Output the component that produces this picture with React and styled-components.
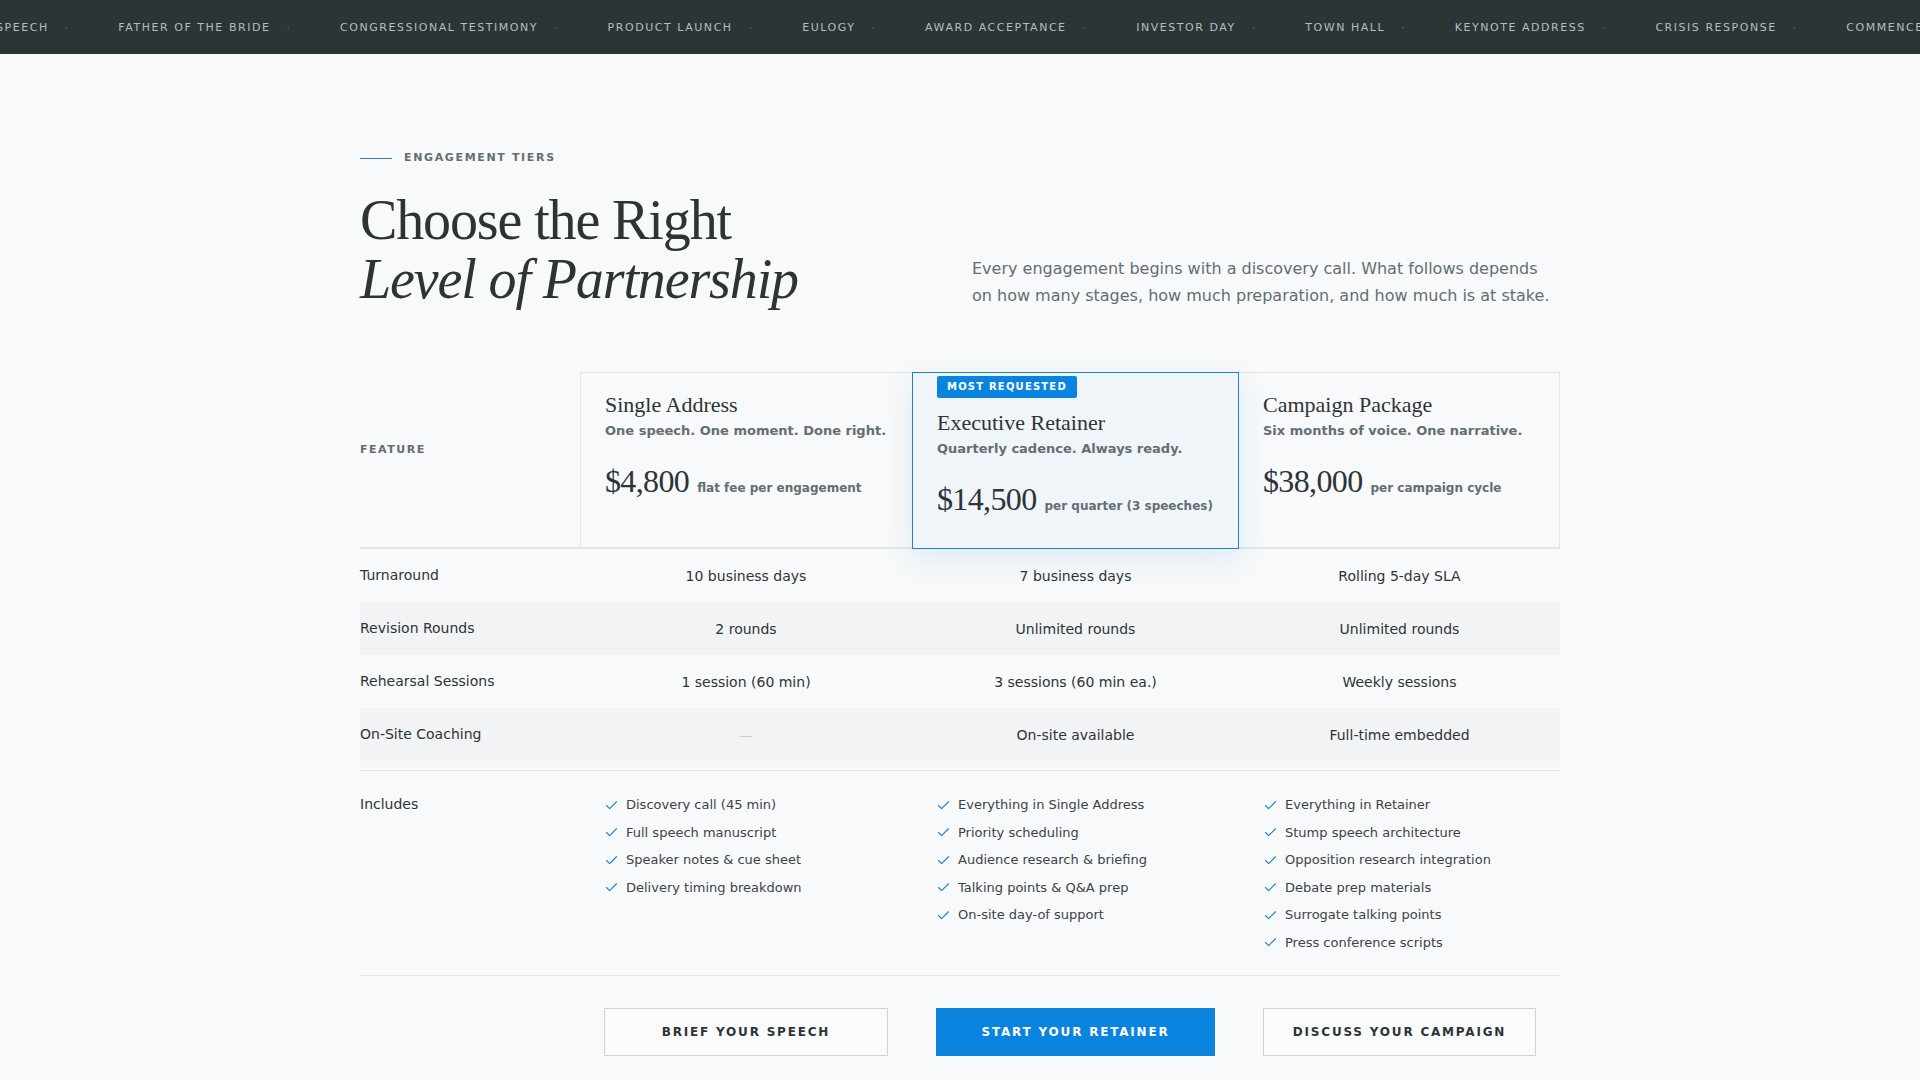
import React from 'react';
import styled, { createGlobalStyle } from 'styled-components';
import { Check } from 'lucide-react';

const COLS = '220px 332px 327px 321px';

const occasions = [
  'Wedding Speech',
  'Father of the Bride',
  'Congressional Testimony',
  'Product Launch',
  'Eulogy',
  'Award Acceptance',
  'Investor Day',
  'Town Hall',
  'Keynote Address',
  'Crisis Response',
  'Commencement Address',
];

const tiers = [
  {
    name: 'Single Address',
    tagline: 'One speech. One moment. Done right.',
    price: '$4,800',
    unit: 'flat fee per engagement',
    cta: 'Brief Your Speech',
    includes: [
      'Discovery call (45 min)',
      'Full speech manuscript',
      'Speaker notes & cue sheet',
      'Delivery timing breakdown',
    ],
  },
  {
    name: 'Executive Retainer',
    tagline: 'Quarterly cadence. Always ready.',
    price: '$14,500',
    unit: 'per quarter (3 speeches)',
    cta: 'Start Your Retainer',
    featured: true,
    includes: [
      'Everything in Single Address',
      'Priority scheduling',
      'Audience research & briefing',
      'Talking points & Q&A prep',
      'On-site day-of support',
    ],
  },
  {
    name: 'Campaign Package',
    tagline: 'Six months of voice. One narrative.',
    price: '$38,000',
    unit: 'per campaign cycle',
    cta: 'Discuss Your Campaign',
    includes: [
      'Everything in Retainer',
      'Stump speech architecture',
      'Opposition research integration',
      'Debate prep materials',
      'Surrogate talking points',
      'Press conference scripts',
    ],
  },
];

const rows = [
  ['Turnaround', '10 business days', '7 business days', 'Rolling 5-day SLA'],
  ['Revision Rounds', '2 rounds', 'Unlimited rounds', 'Unlimited rounds'],
  ['Rehearsal Sessions', '1 session (60 min)', '3 sessions (60 min ea.)', 'Weekly sessions'],
  ['On-Site Coaching', null, 'On-site available', 'Full-time embedded'],
];

function App() {
  return (
    <>
      <GlobalStyle />
      <Ticker>
        <Track>
          {occasions.map((o) => (
            <Occasion key={o}>{o}</Occasion>
          ))}
        </Track>
      </Ticker>

      <Page>
        <Eyebrow>
          <Rule />
          <span>Engagement Tiers</span>
        </Eyebrow>

        <Intro>
          <Title>
            Choose the Right
            <em>Level of Partnership</em>
          </Title>
          <Lede>
            Every engagement begins with a discovery call. What follows depends on how many
            stages, how much preparation, and how much is at stake.
          </Lede>
        </Intro>

        <TierHead>
          <FeatureLabel>Feature</FeatureLabel>
          {tiers.map((t, i) => (
            <TierCard key={t.name} $featured={t.featured} $first={i === 0} $last={i === tiers.length - 1}>
              {t.featured && <Badge>Most Requested</Badge>}
              <TierName>{t.name}</TierName>
              <Tagline>{t.tagline}</Tagline>
              <PriceLine>
                <Amount>{t.price}</Amount>
                <Unit>{t.unit}</Unit>
              </PriceLine>
            </TierCard>
          ))}
        </TierHead>

        {rows.map(([label, ...vals], i) => (
          <Row key={label} $alt={i % 2 === 1}>
            <RowLabel>{label}</RowLabel>
            {vals.map((v, j) => (
              <Value key={j} $empty={!v}>{v || '—'}</Value>
            ))}
          </Row>
        ))}

        <Includes>
          <RowLabel>Includes</RowLabel>
          {tiers.map((t) => (
            <FeatureList key={t.name}>
              {t.includes.map((item) => (
                <li key={item}>
                  <Check size={15} strokeWidth={1.8} />
                  {item}
                </li>
              ))}
            </FeatureList>
          ))}
        </Includes>

        <Actions>
          <span />
          {tiers.map((t) => (
            <Button key={t.cta} $primary={t.featured}>{t.cta}</Button>
          ))}
        </Actions>
      </Page>
    </>
  );
}

const GlobalStyle = createGlobalStyle`
  * { box-sizing: border-box; }
  body {
    margin: 0;
    background: #f7f9fa;
    color: #2d3436;
    font-family: "DejaVu Sans", "Noto Sans", sans-serif;
  }
`;

const Ticker = styled.div`
  height: 54px;
  background: #2d3436;
  display: flex;
  align-items: center;
  overflow: hidden;
`;

const Track = styled.div`
  display: flex;
  margin-left: -74.5px;
  white-space: nowrap;
`;

const Occasion = styled.div`
  display: flex;
  align-items: center;
  gap: 16px;
  margin-right: 48.5px;
  font-size: 11px;
  letter-spacing: 0.14em;
  text-transform: uppercase;
  color: #b2bec3;
  &::after {
    content: '·';
    color: #636e72;
  }
`;

const Page = styled.main`
  width: 1200px;
  margin: 0 auto;
  padding-top: 96px;
`;

const Eyebrow = styled.div`
  display: flex;
  align-items: center;
  gap: 12px;
  font-size: 11px;
  line-height: 16px;
  font-weight: 700;
  letter-spacing: 0.15em;
  text-transform: uppercase;
  color: #636e72;
`;

const Rule = styled.i`
  display: block;
  width: 32px;
  height: 1px;
  background: #1f82cc;
`;

const Intro = styled.div`
  display: grid;
  grid-template-columns: 1fr 1fr;
  gap: 24px;
  align-items: end;
  margin: 25px 0 63px;
`;

const Title = styled.h1`
  margin: 0;
  font-family: "Liberation Serif", "Times New Roman", serif;
  font-weight: 400;
  font-size: 56px;
  line-height: 1.05;
  letter-spacing: -0.02em;
  color: #2d3436;
  em {
    display: block;
    font-style: italic;
  }
`;

const Lede = styled.p`
  margin: 0 0 -1px;
  font-size: 16px;
  line-height: 1.7;
  color: #636e72;
`;

const TierHead = styled.div`
  display: grid;
  grid-template-columns: ${COLS};
  border-bottom: 2px solid #dfe6e9;
`;

const FeatureLabel = styled.div`
  align-self: center;
  padding-bottom: 19px;
  font-size: 11px;
  line-height: 16px;
  font-weight: 700;
  letter-spacing: 0.14em;
  text-transform: uppercase;
  color: #636e72;
`;

const TierCard = styled.div`
  position: relative;
  display: flex;
  flex-direction: column;
  padding: 18px 24px 31px;
  border-top: 1px solid #dfe6e9;
  border-left: ${(p) => (p.$first ? '1px solid #dfe6e9' : 'none')};
  border-right: ${(p) => (p.$last ? '1px solid #dfe6e9' : 'none')};
  ${(p) =>
    p.$featured &&
    `
    z-index: 1;
    margin-bottom: -2px;
    background: #f0f5fa;
    border: 1px solid #1f82cc;
    box-shadow: 0 10px 28px rgba(31, 130, 204, 0.12);
  `}
`;

const Badge = styled.span`
  align-self: flex-start;
  height: 22px;
  margin: -15px 0 11px;
  padding: 0 10px;
  border-radius: 2px;
  background: #0b84e0;
  color: #fff;
  font-size: 10px;
  line-height: 22px;
  font-weight: 700;
  letter-spacing: 0.12em;
  text-transform: uppercase;
`;

const TierName = styled.h3`
  margin: 0;
  font-family: "Liberation Serif", "Times New Roman", serif;
  font-weight: 400;
  font-size: 22px;
  line-height: 1.25;
  color: #2d3436;
`;

const Tagline = styled.div`
  margin-top: 4px;
  font-size: 13px;
  line-height: 1.4;
  font-weight: 700;
  color: #636e72;
`;

const PriceLine = styled.div`
  display: flex;
  align-items: baseline;
  gap: 8px;
  margin-top: 24px;
`;

const Amount = styled.span`
  font-family: "Liberation Serif", "Times New Roman", serif;
  font-size: 32px;
  line-height: 1.1;
  letter-spacing: -0.02em;
  color: #2d3436;
`;

const Unit = styled.span`
  font-size: 12px;
  font-weight: 700;
  color: #636e72;
`;

const Row = styled.div`
  display: grid;
  grid-template-columns: ${COLS};
  align-items: center;
  height: 53px;
  background: ${(p) => (p.$alt ? '#f1f3f5' : 'transparent')};
  font-size: 14px;
`;

const RowLabel = styled.div`
  font-size: 14px;
  line-height: 19.5px;
  color: #2d3436;
`;

const Value = styled.div`
  text-align: center;
  color: ${(p) => (p.$empty ? '#c8d0d4' : '#2d3436')};
`;

const Includes = styled.div`
  display: grid;
  grid-template-columns: ${COLS};
  align-items: start;
  margin-top: 9px;
  padding: 24px 0 23px;
  border-top: 1px solid #dfe6e9;
  border-bottom: 1px solid #dfe6e9;
`;

const FeatureList = styled.ul`
  list-style: none;
  margin: 0;
  padding: 0 24px;
  display: flex;
  flex-direction: column;
  gap: 8px;
  li {
    display: flex;
    align-items: center;
    gap: 7px;
    font-size: 13px;
    line-height: 19.5px;
    color: #3b4347;
  }
  svg {
    flex: none;
    color: #1f82cc;
  }
`;

const Actions = styled.div`
  display: grid;
  grid-template-columns: ${COLS};
  padding-top: 32px;
`;

const Button = styled.button`
  margin: 0 24px;
  height: 48px;
  border: 1px solid ${(p) => (p.$primary ? '#0b84e0' : '#cdd4d9')};
  background: ${(p) => (p.$primary ? '#0b84e0' : '#fafbfc')};
  color: ${(p) => (p.$primary ? '#fff' : '#2d3436')};
  font-family: "DejaVu Sans", sans-serif;
  font-size: 12px;
  font-weight: 700;
  letter-spacing: 0.15em;
  text-transform: uppercase;
  cursor: pointer;
`;

export default App;
